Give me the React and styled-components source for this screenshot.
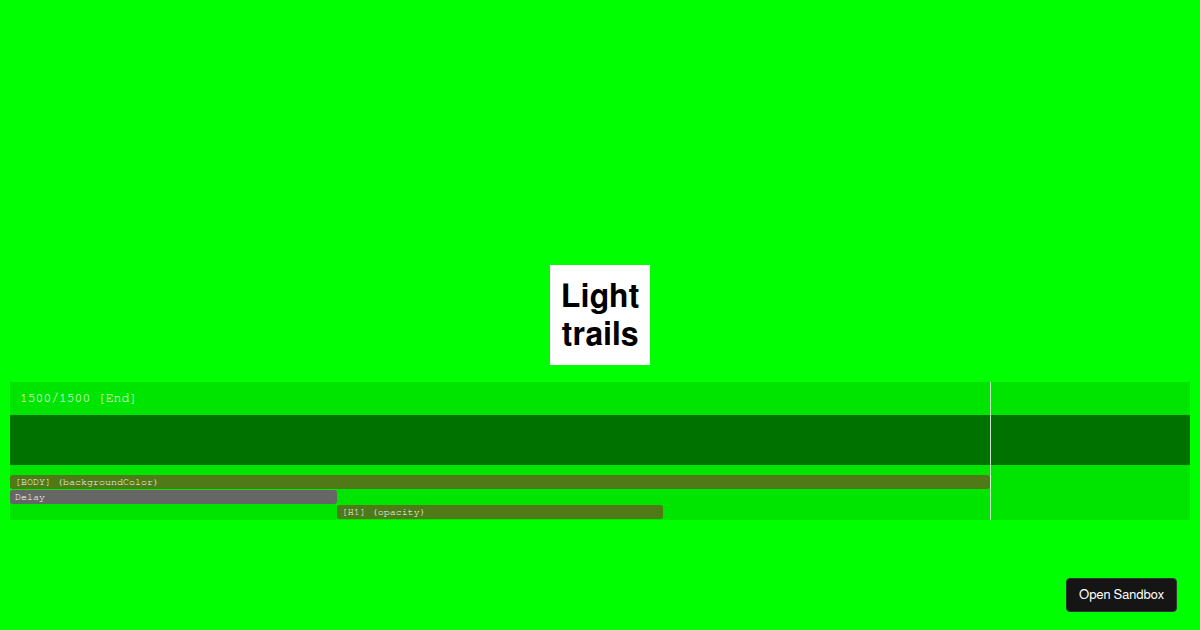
import styled, { createGlobalStyle } from 'styled-components';

const TOTAL = 1500;

const rows = [
	{ label: '[BODY] (backgroundColor)', start: 0, end: 1500 },
	{ label: 'Delay', start: 0, end: 500, delay: true },
	{ label: '[H1] (opacity)', start: 500, end: 1000 },
];

const GlobalStyle = createGlobalStyle`
	body {
		margin: 0;
		background: #00ff00;
		font-family: FreeSans, "Liberation Sans", Arial, sans-serif;
	}
`;

const Page = styled.main`
	min-height: 100vh;
	display: grid;
	grid-template-rows: 1fr auto 1fr;
`;

const Box = styled.div`
	box-sizing: border-box;
	grid-row: 2;
	justify-self: center;
	display: flex;
	align-items: center;
	justify-content: center;
	width: 100px;
	height: 100px;
	padding-top: 2px;
	background: #fff;
	color: #000;

	h1 {
		margin: 0;
		font-size: 32px;
		font-kerning: none;
		line-height: 38px;
		text-align: center;
	}
`;

const Inspector = styled.section`
	position: relative;
	grid-row: 3;
	align-self: end;
	margin: 0 10px 110px;
	background: rgba(0, 0, 0, .1);
	color: #fff;
	font-family: FreeMono, "Liberation Mono", "Courier New", monospace;
`;

const Status = styled.div`
	padding: 8px 10px;
	font-size: 13px;
	line-height: 17px;
`;

const Scrubber = styled.div`
	height: 50px;
	background: rgba(0, 0, 0, .5);
`;

const Track = styled.div`
	padding: 10px 200px 0 0;
`;

const Row = styled.div`
	padding-bottom: 1px;
`;

const Bar = styled.div`
	box-sizing: border-box;
	height: 14px;
	padding: 0 5px;
	border-radius: 3px;
	background: ${({ $delay }) => ($delay ? '#666' : '#4f7a17')};
	font-size: 10px;
	line-height: 14px;
	white-space: nowrap;
`;

const Playhead = styled.div`
	position: absolute;
	top: 0;
	right: 199px;
	bottom: 0;
	width: 1px;
	background: rgba(255, 255, 255, .8);
`;

const SandboxButton = styled.button`
	position: fixed;
	right: 23px;
	bottom: 18px;
	height: 34px;
	padding: 2px 12px 0;
	border: 1px solid #343434;
	border-radius: 4px;
	background: #151515;
	color: #fff;
	font-family: FreeSans, "Liberation Sans", Arial, sans-serif;
	font-size: 13px;
	font-kerning: none;
	line-height: 16px;
	cursor: pointer;
`;

function Timeline() {
	return (
		<Inspector>
			<Status>{TOTAL}/{TOTAL} [End]</Status>
			<Scrubber />
			<Track>
				{rows.map(({ label, start, end, delay }) => (
					<Row key={label}>
						<Bar
							$delay={delay}
							style={{
								marginLeft: `${(start / TOTAL) * 100}%`,
								width: `${((end - start) / TOTAL) * 100}%`,
							}}
						>
							{label}
						</Bar>
					</Row>
				))}
			</Track>
			<Playhead />
		</Inspector>
	)
}

function App() {
	return (
		<>
			<GlobalStyle />
			<Page>
				<Box>
					<h1>Light trails</h1>
				</Box>
				<Timeline />
			</Page>
			<SandboxButton type='button'>Open Sandbox</SandboxButton>
		</>
	)
}

export default App;
